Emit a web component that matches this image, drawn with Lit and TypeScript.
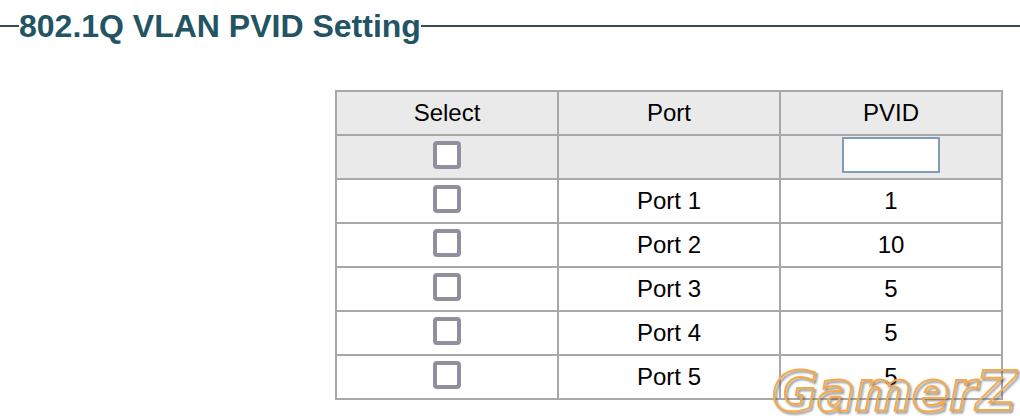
import { LitElement, html, css } from "lit";
import { customElement, state } from "lit/decorators.js";

interface PortRow {
  name: string;
  pvid: number;
}

@customElement("app-root")
export class AppRoot extends LitElement {
  static styles = css`
    :host {
      display: block;
      position: relative;
      min-height: 100vh;
      background: #fff;
      color: #000;
      font: 24px/28px "Liberation Sans", Arial, sans-serif;
    }
    .heading {
      display: flex;
      align-items: center;
      padding-top: 8px;
    }
    .heading::before,
    .heading::after {
      content: "";
      height: 2px;
      background: #3a4a52;
    }
    .heading::before {
      width: 19px;
    }
    .heading::after {
      flex: 1;
    }
    .title {
      margin: 0;
      font-size: 32px;
      line-height: 36px;
      color: #225463;
    }
    .content {
      padding: 46px 17px 20px 335px;
    }
    .ports {
      width: 100%;
      table-layout: fixed;
      border-collapse: collapse;
      text-align: center;
    }
    .ports th,
    .ports td {
      box-sizing: border-box;
      height: 44px;
      padding: 0;
      border: 2px solid #a8a8a8;
      font-weight: 400;
      vertical-align: middle;
    }
    .shaded {
      background: #eaeaea;
    }
    .check {
      appearance: none;
      display: block;
      box-sizing: border-box;
      width: 28px;
      height: 28px;
      margin: 0 auto 4px;
      border: 4px solid #8f8f9d;
      border-radius: 4px;
      background: #fff;
    }
    .check:checked {
      background: #8f8f9d;
    }
    .pvid {
      display: block;
      box-sizing: border-box;
      width: 98px;
      height: 36px;
      margin: 0 auto 4px;
      padding: 2px 4px;
      border: 2px solid #7f9db9;
      border-radius: 0;
      background: #fff;
      font: inherit;
    }
    .watermark {
      position: absolute;
      right: 0;
      bottom: 0;
      width: 248px;
      height: 60px;
      pointer-events: none;
      filter: drop-shadow(2px 2px 1px rgba(80, 80, 80, 0.7));
    }
    .mark {
      font: italic bold 55px "DejaVu Sans", Verdana, sans-serif;
      fill: none;
      stroke: #f9a846;
      stroke-width: 2;
    }
  `;

  @state() private rows: PortRow[] = [
    { name: "Port 1", pvid: 1 },
    { name: "Port 2", pvid: 10 },
    { name: "Port 3", pvid: 5 },
    { name: "Port 4", pvid: 5 },
    { name: "Port 5", pvid: 5 },
  ];

  render() {
    return html`
      <header class="heading"><h1 class="title">802.1Q VLAN PVID Setting</h1></header>
      <main class="content">
        <table class="ports">
          <thead>
            <tr class="shaded">
              <th scope="col">Select</th>
              <th scope="col">Port</th>
              <th scope="col">PVID</th>
            </tr>
          </thead>
          <tbody>
            <tr class="shaded">
              <td><input class="check" type="checkbox" aria-label="Select all ports" /></td>
              <td></td>
              <td><input class="pvid" type="text" aria-label="PVID" /></td>
            </tr>
            ${this.rows.map(
              (row) => html`<tr>
                <td><input class="check" type="checkbox" aria-label=${row.name} /></td>
                <td>${row.name}</td>
                <td>${row.pvid}</td>
              </tr>`
            )}
          </tbody>
        </table>
      </main>
      <svg class="watermark" viewBox="0 0 248 60" role="img" aria-label="GamerZ">
        <text class="mark" x="0" y="50">GamerZ</text>
      </svg>
    `;
  }
}
